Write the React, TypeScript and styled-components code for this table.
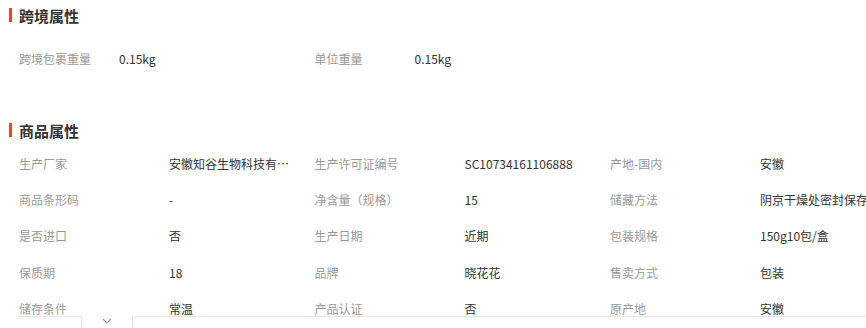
import React from 'react';
import styled, { createGlobalStyle } from 'styled-components';

const GlobalStyle = createGlobalStyle`
  html, body {
    margin: 0;
    padding: 0;
    background: #fff;
    overflow: hidden;
    font-family: "Noto Sans CJK SC", "Noto Sans", "Liberation Sans", sans-serif;
  }
`;

type Attr = { label: string; value: string };

const crossBorder: Attr[] = [
  { label: '跨境包裹重量', value: '0.15kg' },
  { label: '单位重量', value: '0.15kg' },
];

const goods: Attr[] = [
  { label: '生产厂家', value: '安徽知谷生物科技有限公司' },
  { label: '生产许可证编号', value: 'SC10734161106888' },
  { label: '产地-国内', value: '安徽' },
  { label: '商品条形码', value: '-' },
  { label: '净含量（规格）', value: '15' },
  { label: '储藏方法', value: '阴京干燥处密封保存' },
  { label: '是否进口', value: '否' },
  { label: '生产日期', value: '近期' },
  { label: '包装规格', value: '150g10包/盒' },
  { label: '保质期', value: '18' },
  { label: '品牌', value: '晓花花' },
  { label: '售卖方式', value: '包装' },
  { label: '储存条件', value: '常温' },
  { label: '产品认证', value: '否' },
  { label: '原产地', value: '安徽' },
];

const Page = styled.div`
  width: 866px;
  height: 328px;
  position: relative;
  overflow: hidden;
`;

const Section = styled.section<{ $gap: number }>`
  margin-bottom: ${(p) => p.$gap}px;
`;

const Title = styled.h2`
  display: flex;
  align-items: center;
  height: 30px;
  margin: 0;
  padding-left: 9px;
  font-size: 15px;
  font-weight: 700;
  color: #333;

  &::before {
    content: '';
    width: 3px;
    height: 14px;
    margin-right: 7px;
    background: #ff4400;
  }
`;

const Grid = styled.div<{ $top: number }>`
  display: grid;
  grid-template-columns: repeat(3, 295.5px);
  padding: ${(p) => p.$top}px 0 0 19px;
`;

const Cell = styled.div<{ $labelWidth: number }>`
  display: grid;
  grid-template-columns: ${(p) => p.$labelWidth}px 1fr;
  align-items: center;
  height: 36.25px;
  font-size: 12px;
  white-space: nowrap;
`;

const Label = styled.span`
  color: #999;
`;

const Value = styled.span<{ $truncate?: boolean }>`
  color: #333;
  ${(p) =>
    p.$truncate &&
    `
    max-width: 121px;
    overflow: hidden;
    text-overflow: ellipsis;
  `}
`;

const Fold = styled.div`
  position: absolute;
  left: 19px;
  right: 0;
  top: 316px;
  bottom: 0;
  display: flex;
  background: transparent;
`;

const FoldSide = styled.div<{ $side: 'left' | 'right' }>`
  background: #fff;
  border-top: 1px solid #e5e5e5;
  ${(p) =>
    p.$side === 'left'
      ? 'width: 62px; border-right: 1px solid #e5e5e5;'
      : 'flex: 1; border-left: 1px solid #e5e5e5;'}
`;

const FoldTab = styled.div`
  width: 50px;
  display: flex;
  justify-content: center;
  padding-top: 2px;
  background: #fff;
  box-sizing: border-box;
`;

const AttrGrid: React.FC<{ items: Attr[]; labelWidth: number; top: number }> = ({
  items,
  labelWidth,
  top,
}) => (
  <Grid $top={top}>
    {items.map((a) => (
      <Cell key={a.label} $labelWidth={labelWidth}>
        <Label>{a.label}</Label>
        <Value $truncate={a.label === '生产厂家'}>{a.value}</Value>
      </Cell>
    ))}
  </Grid>
);

const App: React.FC = () => (
  <Page>
    <GlobalStyle />
    <Section $gap={39}>
      <Title>跨境属性</Title>
      <AttrGrid items={crossBorder} labelWidth={100} top={10} />
    </Section>
    <Section $gap={0}>
      <Title>商品属性</Title>
      <AttrGrid items={goods} labelWidth={150} top={0} />
    </Section>
    <Fold>
      <FoldSide $side="left" />
      <FoldTab>
        <svg width="10" height="6" viewBox="0 0 10 6">
          <path d="M1 1l4 4 4-4" fill="none" stroke="#999" strokeWidth="1.2" />
        </svg>
      </FoldTab>
      <FoldSide $side="right" />
    </Fold>
  </Page>
);

export default App;
